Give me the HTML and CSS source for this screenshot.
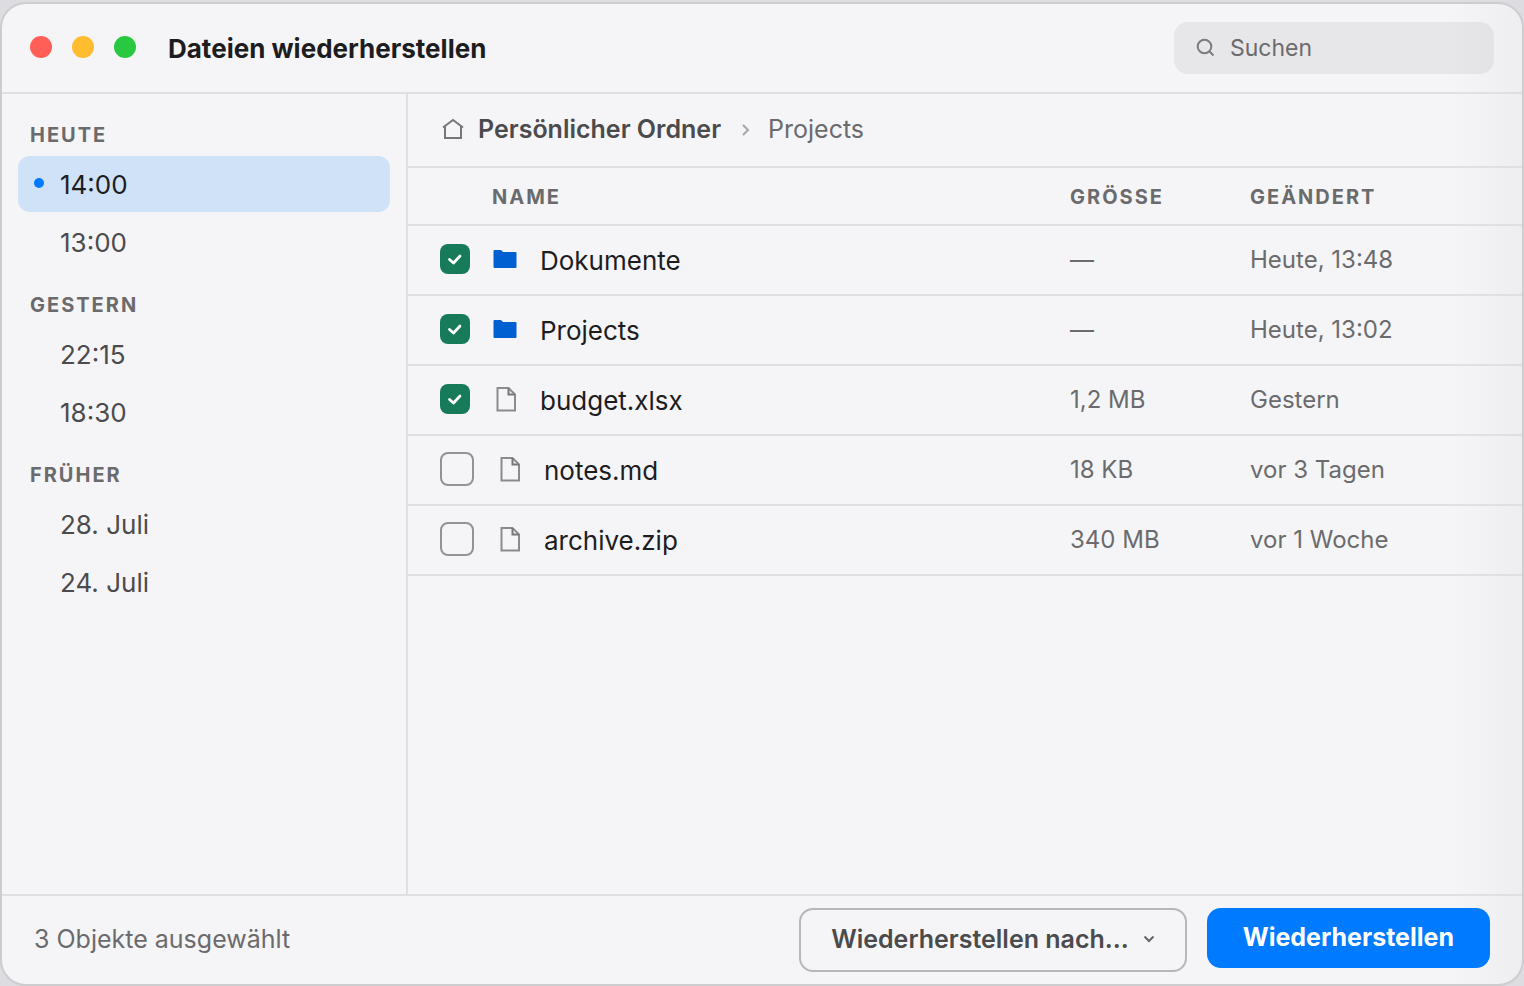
FILE: index.html
```html
<!DOCTYPE html>
<html lang="de">
<head>
    <meta charset="UTF-8">
    <meta name="viewport" content="width=device-width, initial-scale=1.0">
    <title>Dateien wiederherstellen</title>
    <link rel="stylesheet" href="styles.css">
</head>
<body>

    <!-- shared icons -->
    <svg class="sprite" width="0" height="0" aria-hidden="true">
        <symbol id="folder" viewBox="0 0 26 28">
            <path d="M1.500 6a1 1 0 0 1 1-1h6.500l2 2h12.500a1 1 0 0 1 1 1v14a1 1 0 0 1-1 1H2.500a1 1 0 0 1-1-1z" fill="#005fd1"/>
        </symbol>
        <symbol id="file" viewBox="0 0 26 28">
            <path d="M5.500 3h11L23 9.500V25.500H5.500z" fill="none" stroke="#8b8b8d" stroke-width="2"/>
            <path d="M16.500 3v6.500H23" fill="none" stroke="#777779" stroke-width="2"/>
        </symbol>
    </svg>

    <div class="window">
        <header class="titlebar">
            <div class="lights">
                <button class="light close" aria-label="Schließen"></button>
                <button class="light minimize" aria-label="Minimieren"></button>
                <button class="light maximize" aria-label="Maximieren"></button>
            </div>
            <h1>Dateien wiederherstellen</h1>
            <label class="search">
                <svg width="20" height="20" viewBox="0 0 20 20" fill="none" stroke="#7c7c7e" stroke-width="2" aria-hidden="true">
                    <circle cx="8.500" cy="8.500" r="6.800"/>
                    <path d="M13 13l4.500 4.500"/>
                </svg>
                <input type="search" placeholder="Suchen" aria-label="Suchen">
            </label>
        </header>

        <div class="content">
            <nav class="sidebar" aria-label="Sicherungen">
                <h2>HEUTE</h2>
                <button class="snapshot active">14:00</button>
                <button class="snapshot">13:00</button>
                <h2>GESTERN</h2>
                <button class="snapshot">22:15</button>
                <button class="snapshot">18:30</button>
                <h2>FRÜHER</h2>
                <button class="snapshot">28. Juli</button>
                <button class="snapshot">24. Juli</button>
            </nav>

            <main>
                <div class="breadcrumb">
                    <svg width="22" height="22" viewBox="0 0 22 22" fill="none" stroke="#777779" stroke-width="2" aria-hidden="true">
                        <path d="M1 9.500L11 2l10 7.500M3 8v12h16V8"/>
                    </svg>
                    <a class="home" href="#">Persönlicher Ordner</a>
                    <svg class="chevron" width="8" height="14" viewBox="0 0 8 14" fill="none" stroke="#a5a5a7" stroke-width="2" aria-hidden="true">
                        <path d="M1 3l5 5-5 5"/>
                    </svg>
                    <a href="#">Projects</a>
                </div>

                <table>
                    <thead>
                        <tr>
                            <th class="name">NAME</th>
                            <th class="size">GRÖSSE</th>
                            <th class="date">GEÄNDERT</th>
                        </tr>
                    </thead>
                    <tbody>
                        <tr>
                            <td>
                                <label class="file">
                                    <input type="checkbox" checked>
                                    <svg class="icon" aria-hidden="true"><use href="#folder"/></svg>
                                    <span>Dokumente</span>
                                </label>
                            </td>
                            <td>—</td>
                            <td>Heute, 13:48</td>
                        </tr>
                        <tr>
                            <td>
                                <label class="file">
                                    <input type="checkbox" checked>
                                    <svg class="icon" aria-hidden="true"><use href="#folder"/></svg>
                                    <span>Projects</span>
                                </label>
                            </td>
                            <td>—</td>
                            <td>Heute, 13:02</td>
                        </tr>
                        <tr>
                            <td>
                                <label class="file">
                                    <input type="checkbox" checked>
                                    <svg class="icon" aria-hidden="true"><use href="#file"/></svg>
                                    <span>budget.xlsx</span>
                                </label>
                            </td>
                            <td>1,2 MB</td>
                            <td>Gestern</td>
                        </tr>
                        <tr>
                            <td>
                                <label class="file">
                                    <input type="checkbox">
                                    <svg class="icon" aria-hidden="true"><use href="#file"/></svg>
                                    <span>notes.md</span>
                                </label>
                            </td>
                            <td>18 KB</td>
                            <td>vor 3 Tagen</td>
                        </tr>
                        <tr>
                            <td>
                                <label class="file">
                                    <input type="checkbox">
                                    <svg class="icon" aria-hidden="true"><use href="#file"/></svg>
                                    <span>archive.zip</span>
                                </label>
                            </td>
                            <td>340 MB</td>
                            <td>vor 1 Woche</td>
                        </tr>
                    </tbody>
                </table>
            </main>
        </div>

        <footer>
            <p>3 Objekte ausgewählt</p>
            <button class="btn secondary" aria-haspopup="menu">
                Wiederherstellen nach...
                <svg width="12" height="10" viewBox="0 0 12 10" fill="none" stroke="#666668" stroke-width="2" aria-hidden="true">
                    <path d="M1.500 2.500L6 7l4.500-4.500"/>
                </svg>
            </button>
            <button class="btn primary">Wiederherstellen</button>
        </footer>
    </div>

</body>
</html>
```
FILE: styles.css
```css
* {
    box-sizing: border-box;
}

body {
    margin: 0;
    padding-top: 2px;
    height: 100vh;
    background-color: #dcdce1;
    font-family: Inter, "Liberation Sans", sans-serif;
    font-size: 25px;
    line-height: 32px;
    color: #6b6b6d;
}

h1, h2, p {
    margin: 0;
}

button, input {
    font: inherit;
    color: inherit;
    margin: 0;
    border: none;
    padding: 0;
    background: none;
}

a {
    color: inherit;
    text-decoration: none;
}

.sprite {
    position: absolute;
}

.window {
    height: 100%;
    display: flex;
    flex-direction: column;
    border: 2px solid #cdcdd0;
    border-radius: 26px;
    overflow: hidden;
    background: linear-gradient(to left, #eeeef0, #f5f5f7 70px);
}

/* title bar */
.titlebar {
    display: flex;
    align-items: center;
    height: 90px;
    padding: 0 28px;
    border-bottom: 2px solid #e0e0e2;
}

.lights {
    display: flex;
    gap: 20px;
    margin-right: 32px;
    padding-bottom: 2px;
}

.light {
    width: 22px;
    height: 22px;
    border-radius: 50%;
}

.close {
    background-color: #ff5f57;
}

.minimize {
    background-color: #febc2e;
}

.maximize {
    background-color: #28c840;
}

h1 {
    padding-top: 2px;
    font-size: 26px;
    font-weight: 700;
    color: #1d1d1f;
}

.search {
    display: flex;
    align-items: center;
    gap: 14px;
    width: 320px;
    height: 52px;
    margin-left: auto;
    padding: 0 22px;
    border-radius: 14px;
    background-color: rgba(0, 0, 0, 0.055);
}

.search input {
    flex: 1;
    min-width: 0;
    font-size: 23px;
    outline: none;
}

.search input::placeholder {
    color: #6b6b6d;
    opacity: 1;
}

.content {
    flex: 1;
    display: flex;
    min-height: 0;
}

/* sidebar */
.sidebar {
    width: 406px;
    padding: 25px 16px;
    border-right: 2px solid #e0e0e2;
}

.sidebar h2 {
    padding: 0 12px 5px;
    font-size: 20px;
    font-weight: 700;
    letter-spacing: 2px;
}

.snapshot + h2 {
    margin-top: 19px;
}

.snapshot {
    display: flex;
    align-items: center;
    width: 100%;
    height: 56px;
    margin-bottom: 2px;
    padding: 2px 16px 0 42px;
    border-radius: 12px;
    font-size: 26px;
    color: #4b4b4d;
}

.snapshot.active {
    gap: 16px;
    padding-left: 16px;
    background-color: #d0e2f8;
    color: #1d1d1f;
}

.snapshot.active::before {
    content: "";
    width: 10px;
    height: 10px;
    margin-bottom: 4px;
    border-radius: 50%;
    background-color: #007aff;
}

/* file list */
main {
    flex: 1;
    min-width: 0;
}

.breadcrumb {
    display: flex;
    align-items: center;
    height: 74px;
    padding: 0 34px 2px;
    border-bottom: 2px solid #e0e0e2;
}

.home {
    margin-left: 14px;
    font-weight: 600;
    color: #4b4b4d;
}

.chevron {
    margin: 0 18px 0 21px;
}

table {
    width: 100%;
    table-layout: fixed;
    border-collapse: separate;
    border-spacing: 0;
    font-size: 24px;
}

th, td {
    height: 70px;
    padding: 0;
    text-align: left;
    vertical-align: middle;
    border-bottom: 2px solid #e0e0e2;
}

th {
    height: 58px;
    padding-top: 2px;
    font-size: 20px;
    font-weight: 700;
    letter-spacing: 2px;
}

th.name {
    padding-left: 84px;
}

th.size {
    width: 180px;
}

th.date {
    width: 272px;
}

.file {
    display: flex;
    align-items: center;
    gap: 22px;
    padding: 0 0 2px 32px;
    font-size: 26px;
    color: #1d1d1f;
}

.file span {
    padding-top: 4px;
}

.icon {
    width: 26px;
    height: 28px;
}

.file input {
    appearance: none;
    width: 34px;
    height: 34px;
    border: 2px solid #939395;
    border-radius: 8px;
}

.file input:checked {
    width: 30px;
    height: 30px;
    border: none;
    background: #177a58 url("data:image/svg+xml,%3Csvg xmlns='http://www.w3.org/2000/svg' viewBox='0 0 30 30'%3E%3Cpath d='M9.500 15.500l4 3.500 6.500-7' fill='none' stroke='white' stroke-width='2.800' stroke-linecap='round' stroke-linejoin='round'/%3E%3C/svg%3E") center / 100%;
}

/* bottom bar */
footer {
    display: flex;
    align-items: flex-start;
    height: 90px;
    padding: 12px 32px;
    border-top: 2px solid #e0e0e2;
}

footer p {
    flex: 1;
    line-height: 62px;
}

.btn {
    display: flex;
    align-items: center;
    justify-content: center;
    border-radius: 14px;
    font-weight: 600;
}

.secondary {
    gap: 14px;
    height: 64px;
    padding: 0 30px 2px;
    margin-right: 20px;
    border: 2px solid #b7b7b9;
    color: #4b4b4d;
}

.primary {
    height: 60px;
    padding: 0 36px 2px;
    background-color: #007aff;
    color: #fff;
    font-weight: 700;
}
```
